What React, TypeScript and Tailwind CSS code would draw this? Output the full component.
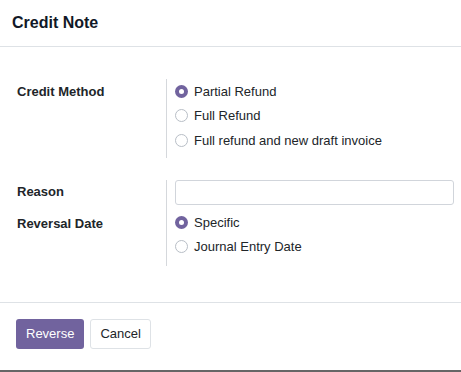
import React from 'react';

function Radio({ checked, label }: { checked?: boolean; label: string }) {
  return (
    <label className="flex h-[24.5px] items-center gap-[6px]">
      {checked ? (
        <span className="flex h-[13px] w-[13px] items-center justify-center rounded-full bg-[#71639e]">
          <span className="h-[5px] w-[5px] rounded-full bg-white" />
        </span>
      ) : (
        <span className="h-[13px] w-[13px] rounded-full border border-[#b8bec6] bg-white" />
      )}
      <span>{label}</span>
    </label>
  );
}

export default function App() {
  return (
    <div className="flex h-[372px] w-[461px] flex-col bg-white text-[13px] text-[#212529] [font-family:'Liberation_Sans',Arial,sans-serif]">
      <div className="flex h-[47px] shrink-0 items-center border-b border-[#dee2e6] px-[12px] pb-[1px] text-[16px] font-bold text-[#111827]">
        Credit Note
      </div>
      <div className="flex-1 pt-[32px]">
        <div className="flex">
          <div className="w-[166px] shrink-0 pl-[17px] pt-[3px] font-bold leading-[20px]">Credit Method</div>
          <div className="flex h-[79px] flex-col border-l border-[#d5d8dc] pl-[8px]">
            <Radio checked label="Partial Refund" />
            <Radio label="Full Refund" />
            <Radio label="Full refund and new draft invoice" />
          </div>
        </div>
        <div className="mt-[22px] flex">
          <div className="flex w-[166px] shrink-0 flex-col pl-[17px] font-bold">
            <div className="flex h-[24px] items-center">Reason</div>
            <div className="mt-[8px] flex h-[24px] items-center">Reversal Date</div>
          </div>
          <div className="flex h-[86px] flex-1 flex-col border-l border-[#d5d8dc] pl-[8px] pr-[8px]">
            <input className="h-[25px] w-[279px] shrink-0 rounded-[3px] border border-[#d1d5db] px-2 outline-none" />
            <div className="mt-[5px]">
              <Radio checked label="Specific" />
              <Radio label="Journal Entry Date" />
            </div>
          </div>
        </div>
      </div>
      <div className="flex h-[68px] shrink-0 items-start gap-[6px] border-t border-[#dee2e6] px-[16px] pt-[16px]">
        <button className="h-[30px] rounded-[3px] bg-[#71639e] px-[10px] text-white">Reverse</button>
        <button className="h-[30px] rounded-[3px] border border-[#dee2e6] bg-white px-[9px] text-[#212529]">Cancel</button>
      </div>
      <div className="h-[2px] shrink-0 bg-[#666666]" />
    </div>
  );
}
